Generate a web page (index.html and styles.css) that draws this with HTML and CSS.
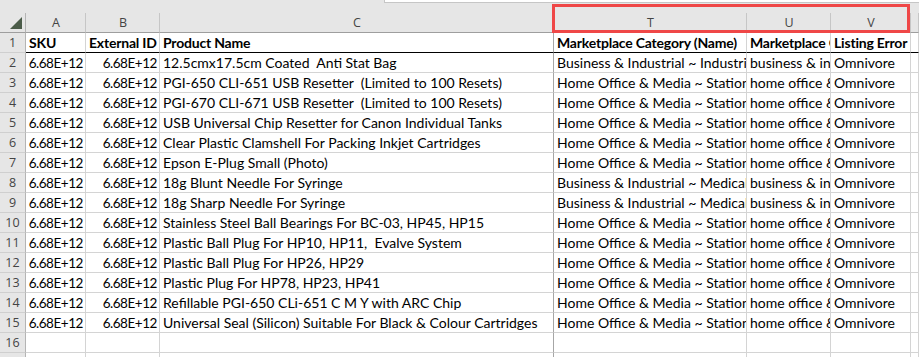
FILE: index.html
```html
<!DOCTYPE html>
<html lang="en">
<head>
    <meta charset="UTF-8">
    <meta name="viewport" content="width=device-width, initial-scale=1.0">
    <title>Listing Errors</title>
    <link rel="stylesheet" href="styles.css">
</head>
<body>
    <div class="toolbar">
        <div class="formula-bar"></div>
    </div>

    <div class="sheet">
        <div class="row head">
            <div class="corner">
                <svg width="12" height="12" viewBox="0 0 12 12"><polygon points="12,0 12,12 0,12" fill="#4b5c49"/></svg>
            </div>
            <div>A</div>
            <div>B</div>
            <div class="hidden-after">C</div>
            <div>T</div>
            <div>U</div>
            <div>V</div>
            <div></div>
        </div>

        <div class="row titles">
            <div class="num">1</div>
            <div>SKU</div>
            <div>External ID</div>
            <div class="hidden-after">Product Name</div>
            <div>Marketplace Category (Name)</div>
            <div>Marketplace Category</div>
            <div>Listing Error</div>
            <div></div>
        </div>

        <div class="row"><div class="num">2</div><div class="r">6.68E+12</div><div class="r">6.68E+12</div><div class="hidden-after">12.5cmx17.5cm Coated  Anti Stat Bag</div><div>Business &amp; Industrial ~ Industrial Supply</div><div>business &amp; industrial</div><div>Omnivore</div><div></div></div>
        <div class="row"><div class="num">3</div><div class="r">6.68E+12</div><div class="r">6.68E+12</div><div class="hidden-after">PGI-650 CLI-651 USB Resetter  (Limited to 100 Resets)</div><div>Home Office &amp; Media ~ Stationery</div><div>home office &amp; media</div><div>Omnivore</div><div></div></div>
        <div class="row"><div class="num">4</div><div class="r">6.68E+12</div><div class="r">6.68E+12</div><div class="hidden-after">PGI-670 CLI-671 USB Resetter  (Limited to 100 Resets)</div><div>Home Office &amp; Media ~ Stationery</div><div>home office &amp; media</div><div>Omnivore</div><div></div></div>
        <div class="row"><div class="num">5</div><div class="r">6.68E+12</div><div class="r">6.68E+12</div><div class="hidden-after">USB Universal Chip Resetter for Canon Individual Tanks</div><div>Home Office &amp; Media ~ Stationery</div><div>home office &amp; media</div><div>Omnivore</div><div></div></div>
        <div class="row"><div class="num">6</div><div class="r">6.68E+12</div><div class="r">6.68E+12</div><div class="hidden-after">Clear Plastic Clamshell For Packing Inkjet Cartridges</div><div>Home Office &amp; Media ~ Stationery</div><div>home office &amp; media</div><div>Omnivore</div><div></div></div>
        <div class="row"><div class="num">7</div><div class="r">6.68E+12</div><div class="r">6.68E+12</div><div class="hidden-after">Epson E-Plug Small (Photo)</div><div>Home Office &amp; Media ~ Stationery</div><div>home office &amp; media</div><div>Omnivore</div><div></div></div>
        <div class="row"><div class="num">8</div><div class="r">6.68E+12</div><div class="r">6.68E+12</div><div class="hidden-after">18g Blunt Needle For Syringe</div><div>Business &amp; Industrial ~ Medical</div><div>business &amp; industrial</div><div>Omnivore</div><div></div></div>
        <div class="row"><div class="num">9</div><div class="r">6.68E+12</div><div class="r">6.68E+12</div><div class="hidden-after">18g Sharp Needle For Syringe</div><div>Business &amp; Industrial ~ Medical</div><div>business &amp; industrial</div><div>Omnivore</div><div></div></div>
        <div class="row"><div class="num">10</div><div class="r">6.68E+12</div><div class="r">6.68E+12</div><div class="hidden-after">Stainless Steel Ball Bearings For BC-03, HP45, HP15</div><div>Home Office &amp; Media ~ Stationery</div><div>home office &amp; media</div><div>Omnivore</div><div></div></div>
        <div class="row"><div class="num">11</div><div class="r">6.68E+12</div><div class="r">6.68E+12</div><div class="hidden-after">Plastic Ball Plug For HP10, HP11,  Evalve System</div><div>Home Office &amp; Media ~ Stationery</div><div>home office &amp; media</div><div>Omnivore</div><div></div></div>
        <div class="row"><div class="num">12</div><div class="r">6.68E+12</div><div class="r">6.68E+12</div><div class="hidden-after">Plastic Ball Plug For HP26, HP29</div><div>Home Office &amp; Media ~ Stationery</div><div>home office &amp; media</div><div>Omnivore</div><div></div></div>
        <div class="row"><div class="num">13</div><div class="r">6.68E+12</div><div class="r">6.68E+12</div><div class="hidden-after">Plastic Plug For HP78, HP23, HP41</div><div>Home Office &amp; Media ~ Stationery</div><div>home office &amp; media</div><div>Omnivore</div><div></div></div>
        <div class="row"><div class="num">14</div><div class="r">6.68E+12</div><div class="r">6.68E+12</div><div class="hidden-after">Refillable PGI-650 CLi-651 C M Y with ARC Chip</div><div>Home Office &amp; Media ~ Stationery</div><div>home office &amp; media</div><div>Omnivore</div><div></div></div>
        <div class="row"><div class="num">15</div><div class="r">6.68E+12</div><div class="r">6.68E+12</div><div class="hidden-after">Universal Seal (Silicon) Suitable For Black &amp; Colour Cartridges</div><div>Home Office &amp; Media ~ Stationery</div><div>home office &amp; media</div><div>Omnivore</div><div></div></div>
        <div class="row"><div class="num">16</div><div></div><div></div><div class="hidden-after"></div><div></div><div></div><div></div><div></div></div>
        <div class="row"><div class="num">17</div><div></div><div></div><div class="hidden-after"></div><div></div><div></div><div></div><div></div></div>

        <div class="highlight"></div>
    </div>
</body>
</html>
```

FILE: styles.css
```css
body {
    margin: 0;
    background: #ffffff;
    font-family: Lato, "Liberation Sans", sans-serif;
    color: #000;
    overflow: hidden;
}
.toolbar {
    height: 13px;
    background: #e6e6e6;
}
.formula-bar {
    margin-left: 384px;
    height: 2px;
    background: #ffffff;
    border-left: 1px solid #c6c6c6;
    border-bottom: 1px solid #c6c6c6;
}
.sheet {
    position: relative;
}
.row {
    display: grid;
    grid-template-columns: 26px 60px 74px 394px 193px 84px 80px 1fr;
    height: 20px;
}
.row > div {
    box-sizing: border-box;
    border-right: 1px solid #d4d4d4;
    border-bottom: 1px solid #d4d4d4;
    padding: 0 2px 0 3px;
    overflow: hidden;
    white-space: pre;
    font-size: 14px;
    line-height: 20px;
}
.row > .r {
    text-align: right;
    padding: 0 2px 0 0;
    font-size: 13.5px;
    letter-spacing: -0.45px;
}
.row > .hidden-after {
    border-right-color: #a6a6a6;
}
.row > .num {
    background: #e6e6e6;
    color: #444;
    text-align: center;
    padding: 0;
    font-family: "Open Sans", "Liberation Sans", sans-serif;
    font-size: 12.5px;
    border-right-color: #b4b4b4;
    border-bottom-color: #cfcfcf;
}
.head > div {
    background: #e6e6e6;
    color: #444;
    text-align: center;
    font-family: "Open Sans", "Liberation Sans", sans-serif;
    font-size: 12.5px;
    border-right-color: #c6c6c6;
    border-bottom-color: #9e9e9e;
}
.head > .corner {
    display: flex;
    justify-content: flex-end;
    align-items: flex-end;
    padding: 0 3px 3px 0;
    border-right-color: #b4b4b4;
}
.titles > div {
    font-weight: bold;
    letter-spacing: -0.2px;
    border-bottom-color: #000;
}
.titles > .num {
    font-weight: normal;
    letter-spacing: 0;
    border-bottom-color: #cfcfcf;
}
.highlight {
    position: absolute;
    left: 552px;
    top: -9px;
    width: 358px;
    height: 29px;
    box-sizing: border-box;
    border: 3px solid #ef4747;
}
```
